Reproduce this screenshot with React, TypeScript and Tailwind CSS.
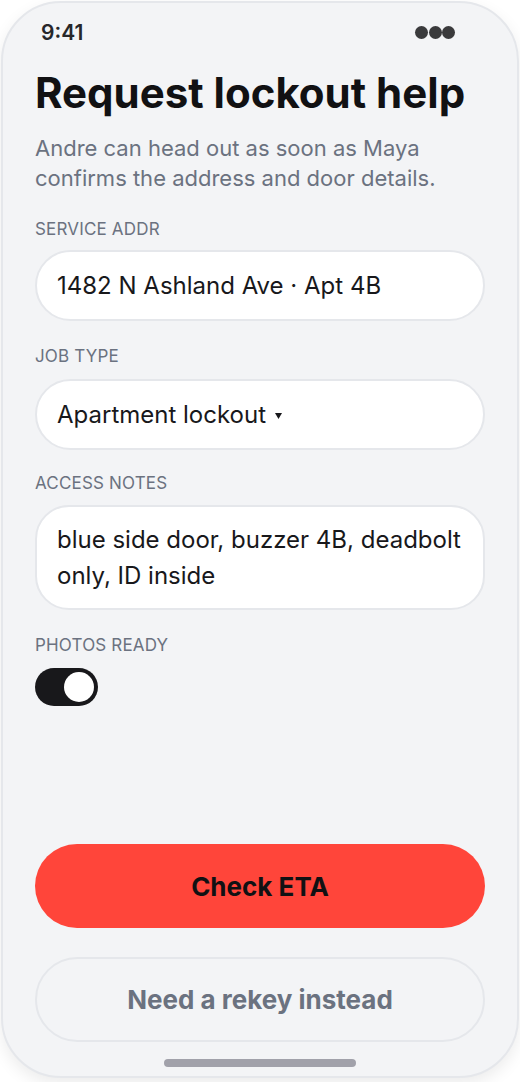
import React, { useState } from 'react';

const font = { fontFamily: 'Inter, "Noto Sans", sans-serif' };

const Label: React.FC<{ children: React.ReactNode }> = ({ children }) => (
  <div className="text-[17px] leading-[22px] tracking-[0.01em] text-[#6b7280] uppercase">{children}</div>
);

const App: React.FC = () => {
  const [photosReady, setPhotosReady] = useState(true);

  return (
    <div className="w-[520px] h-[1082px] bg-white" style={font}>
      <div className="w-[518px] h-[1077px] ml-px mt-px rounded-[60px] border-2 border-[#e5e7eb] bg-[#f3f4f6] shadow-[0_6px_16px_rgba(0,0,0,0.08)] flex flex-col overflow-hidden">
        {/* status bar */}
        <div className="flex items-center justify-between pl-[38px] pr-[62px] mt-[17px] h-[24px]">
          <span className="text-[21px] font-semibold text-[#27272a] leading-none">9:41</span>
          <div className="flex gap-[0.5px]">
            <span className="w-[13px] h-[13px] rounded-full bg-[#3a3a3c]" />
            <span className="w-[13px] h-[13px] rounded-full bg-[#3a3a3c]" />
            <span className="w-[13px] h-[13px] rounded-full bg-[#3a3a3c]" />
          </div>
        </div>

        <div className="flex-1 flex flex-col px-[32px]">
          <h1 className="mt-[24px] text-[42px] leading-[50px] font-bold text-[#111113]">
            Request lockout help
          </h1>
          <p className="mt-[15px] text-[22px] leading-[30px] text-[#6b7280]">
            Andre can head out as soon as Maya confirms the address and door details.
          </p>

          <div className="mt-[25px]">
            <Label>Service addr</Label>
            <div className="mt-[10px] h-[71px] rounded-full border-2 border-[#e5e7eb] bg-white flex items-center px-[20px] text-[24px] text-[#18181b]">
              1482 N Ashland Ave · Apt 4B
            </div>
          </div>

          <div className="mt-[24px]">
            <Label>Job type</Label>
            <div className="mt-[12px] h-[71px] rounded-full border-2 border-[#e5e7eb] bg-white flex items-center px-[20px] text-[24px] text-[#18181b]">
              Apartment lockout
              <svg className="ml-[9px] mt-[2px]" width="7" height="6" viewBox="0 0 7 6">
                <path d="M0 0h7L3.5 6z" fill="#18181b" />
              </svg>
            </div>
          </div>

          <div className="mt-[22px]">
            <Label>Access notes</Label>
            <div className="mt-[11px] h-[105px] rounded-[34px] border-2 border-[#e5e7eb] bg-white px-[20px] pt-[15px] text-[24px] leading-[36px] text-[#18181b]">
              blue side door, buzzer 4B, deadbolt only, ID inside
            </div>
          </div>

          <div className="mt-[24px]">
            <Label>Photos ready</Label>
            <button
              onClick={() => setPhotosReady((p) => !p)}
              className={`mt-[12px] w-[63px] h-[38px] rounded-full flex items-center px-[4px] ${photosReady ? 'bg-[#18181b] justify-end' : 'bg-[#d4d4d8] justify-start'}`}
            >
              <span className="w-[30px] h-[30px] rounded-full bg-white" />
            </button>
          </div>

          <div className="flex-1" />

          <button className="h-[84px] rounded-full bg-[#ff453a] text-[26px] font-bold text-[#111113]">
            Check ETA
          </button>
          <button className="mt-[29px] h-[85px] rounded-full border-2 border-[#e5e7eb] text-[26px] font-bold text-[#6b7280]">
            Need a rekey instead
          </button>

          <div className="flex justify-center pt-[17px] pb-[9px]">
            <span className="w-[192px] h-[8px] rounded-full bg-[#a1a1aa]" />
          </div>
        </div>
      </div>
    </div>
  );
};

export default App;
